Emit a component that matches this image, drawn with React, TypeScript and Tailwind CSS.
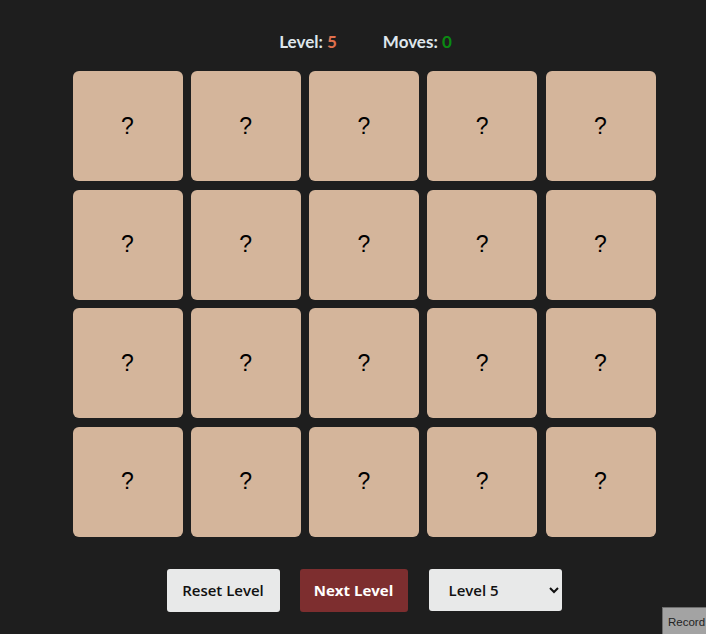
import React from "react";

export default function App() {
  const tiles = Array.from({ length: 20 });
  return (
    <div className="relative min-h-[634px] w-full overflow-hidden bg-[#1e1e1e]">
      <div className="flex flex-col items-center pl-[22px] pt-[32px]">
        <div
          className="ml-[3px] flex items-center gap-[46px] text-[17px] font-bold leading-[20px] text-[#dfe6ec]"
          style={{ fontFamily: '"Lato", "Noto Sans", sans-serif' }}
        >
          <div>
            Level: <span className="text-[#e0714e]">5</span>
          </div>
          <div>
            Moves: <span className="text-[#0b8a12]">0</span>
          </div>
        </div>
        <div className="mt-[19px] grid grid-cols-[repeat(5,110px)] gap-x-[8.25px] gap-y-[8.5px]">
          {tiles.map((_, i) => (
            <div
              key={i}
              className="flex h-[110px] w-full items-center justify-center rounded-[6px] bg-[#d4b59b] text-[23px] text-black"
              style={{ fontFamily: '"Liberation Sans", Arial, sans-serif' }}
            >
              ?
            </div>
          ))}
        </div>
        <div
          className="mt-[32px] flex items-center gap-[20px] text-[15px]"
          style={{ fontFamily: '"Open Sans", "Noto Sans", sans-serif' }}
        >
          <button className="h-[43px] w-[113px] rounded-[3px] bg-[#e8e9e9] font-semibold text-[#111]">
            Reset Level
          </button>
          <button className="h-[43px] w-[108px] rounded-[3px] bg-[#7d2e2f] font-bold text-white">
            Next Level
          </button>
          <select
            defaultValue="5"
            className="ml-[1px] h-[42px] w-[133px] rounded-[3px] bg-[#e8e9e9] pl-[16px] pr-[4px] font-semibold text-[#111] outline-none"
          >
            {[1, 2, 3, 4, 5, 6, 7, 8, 9, 10].map((n) => (
              <option key={n} value={String(n)}>
                Level {n}
              </option>
            ))}
          </select>
        </div>
      </div>
      <div
        className="absolute left-[662px] top-[607px] whitespace-nowrap border border-[#6e6e6e] bg-[#a3a3a3] pl-[5px] pr-[2px] pt-[7px] pb-[6px] text-[11.5px] leading-[14px] text-[#222]"
        style={{ fontFamily: '"Liberation Sans", Arial, sans-serif' }}
      >
        Record
      </div>
    </div>
  );
}
